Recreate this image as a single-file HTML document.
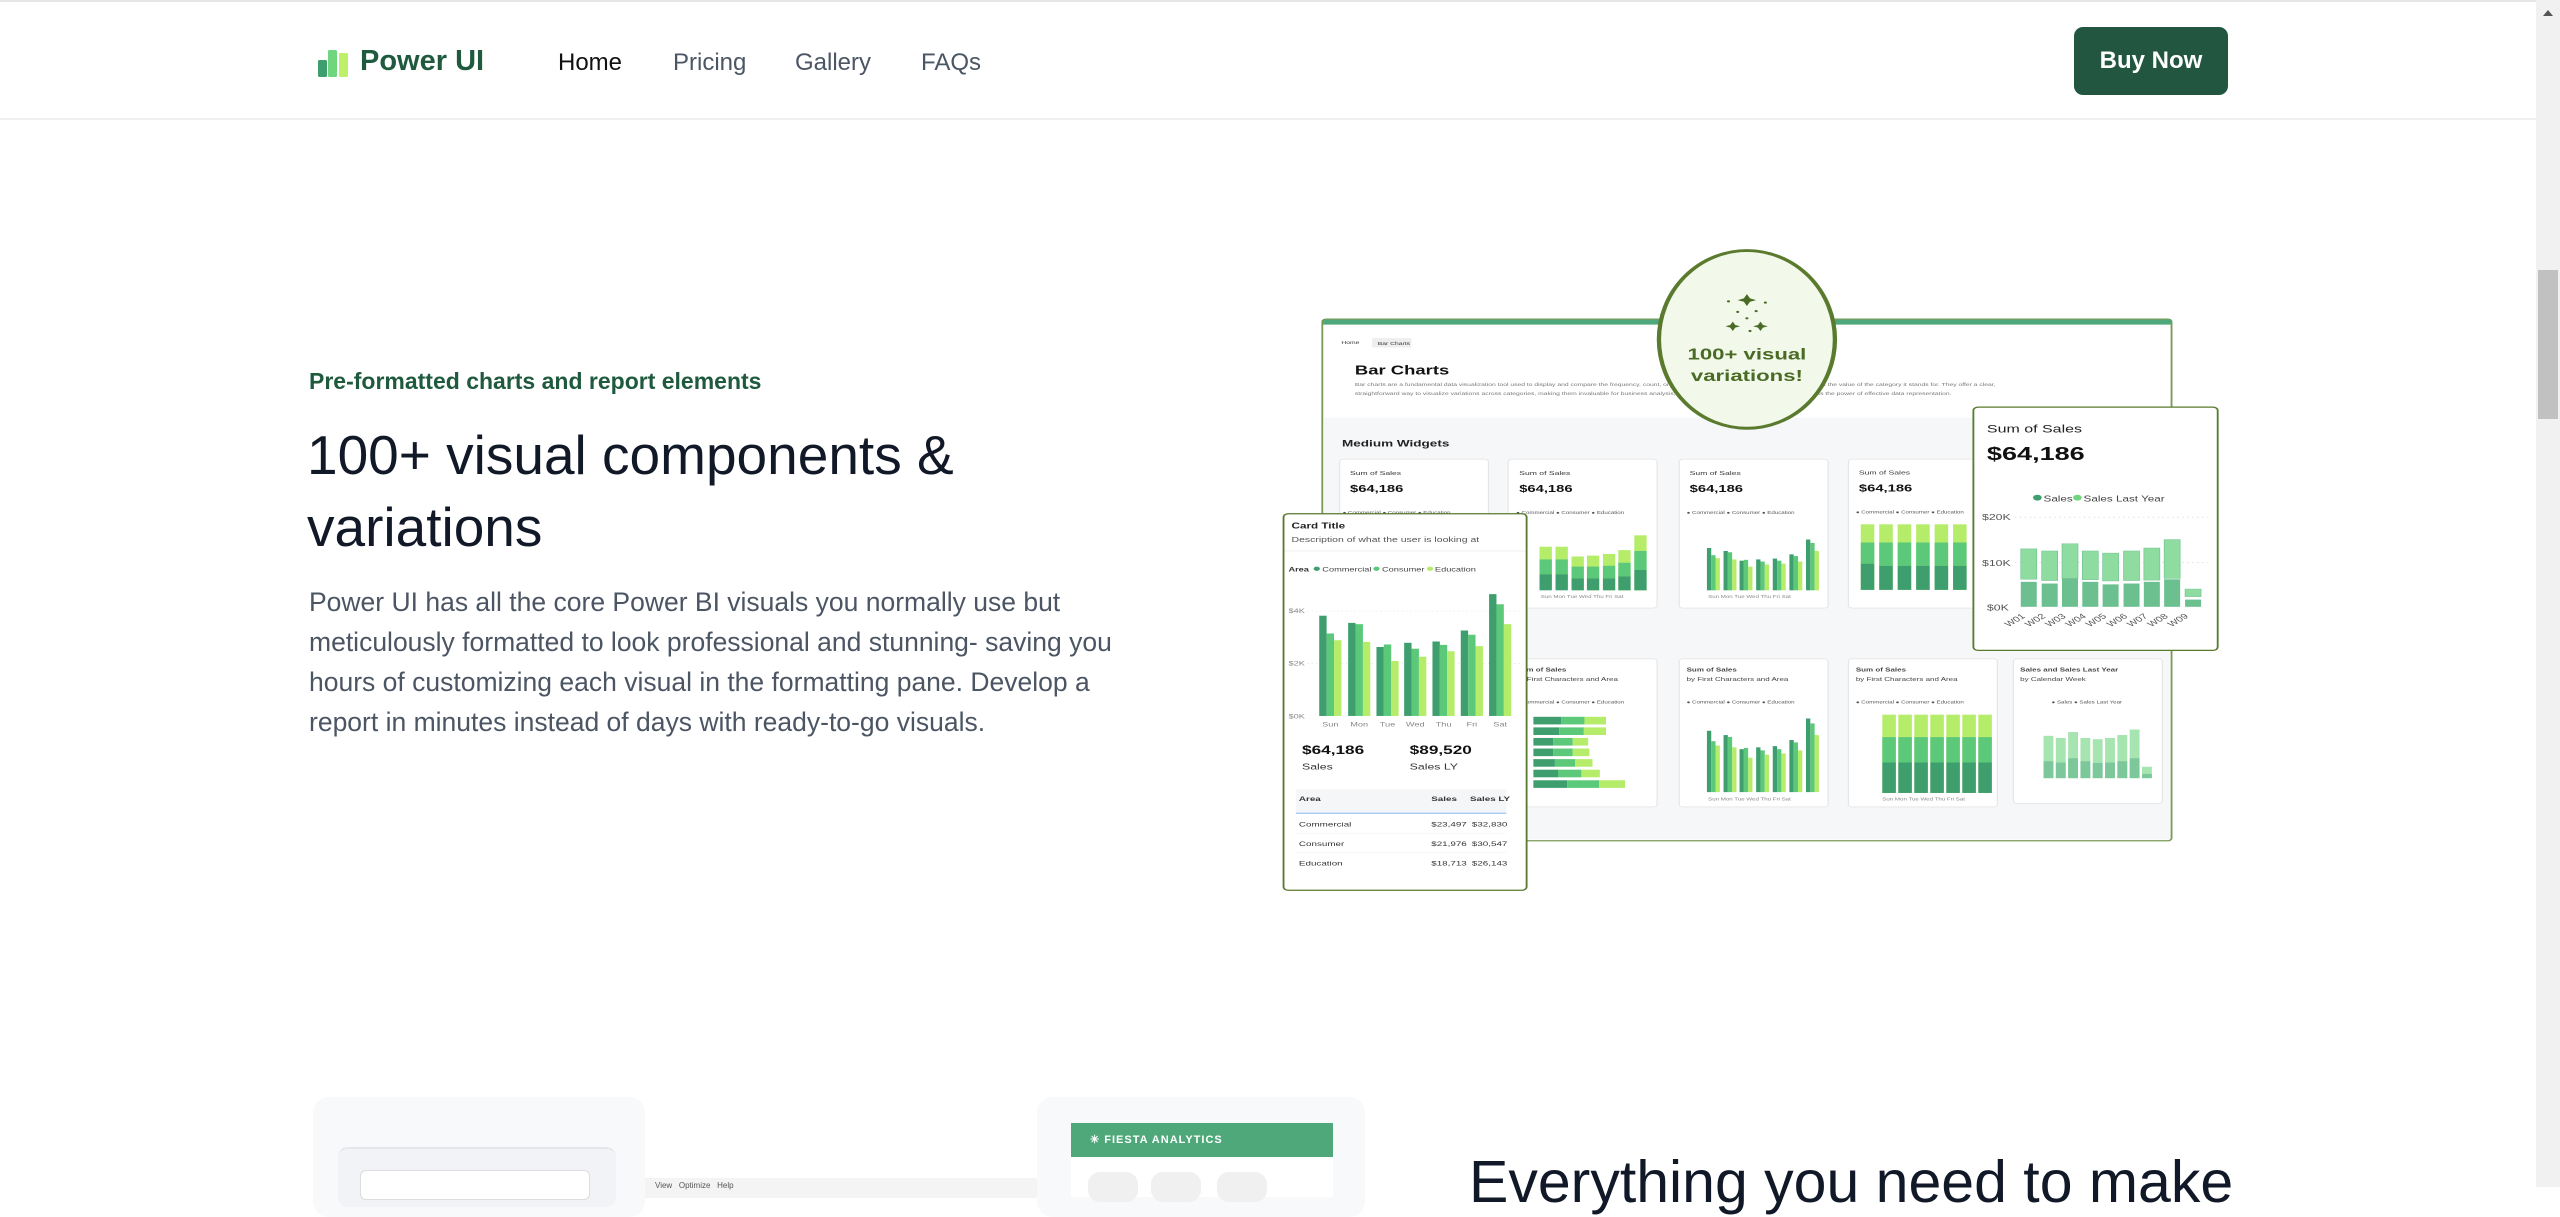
<!DOCTYPE html>
<html><head><meta charset="utf-8">
<style>
*{margin:0;padding:0;box-sizing:border-box}
html,body{width:2560px;height:1187px;overflow:hidden;background:#fff;font-family:"Liberation Sans",sans-serif}
.abs{position:absolute}
.hdr{left:0;top:0;width:2536px;height:120px;border-top:2px solid #e5e5e5;border-bottom:2px solid #f0f0f0;background:#fff}
.nav{font-size:24px;color:#4b5563;top:49px}
.sb{left:2536px;top:0;width:24px;height:1187px;background:#f1f1f1}
</style></head><body>
<div class="abs hdr"></div>
<svg class="abs" style="left:318px;top:48px" width="36" height="30"><rect x="0" y="12" width="9" height="17" rx="1.5" fill="#3f9e6e"/><rect x="10" y="2" width="9" height="27" rx="1.5" fill="#6fd67e"/><rect x="21" y="5" width="9" height="24" rx="1.5" fill="#bff06a"/></svg>
<div class="abs" style="left:360px;top:45px;font-size:29px;font-weight:bold;color:#1f5a3e">Power UI</div>
<div class="abs nav" style="left:558px;color:#111">Home</div>
<div class="abs nav" style="left:673px">Pricing</div>
<div class="abs nav" style="left:795px">Gallery</div>
<div class="abs nav" style="left:921px">FAQs</div>
<div class="abs" style="left:2074px;top:27px;width:154px;height:68px;background:#235640;border-radius:9px;color:#fff;font-size:24px;font-weight:bold;text-align:center;line-height:68px">Buy Now</div>
<div class="abs sb"><div class="abs" style="left:2px;top:270px;width:20px;height:149px;background:#c1c1c1"></div><div class="abs" style="left:7px;top:10px;border:5px solid transparent;border-bottom:6px solid #555;border-top:0"></div></div>

<div class="abs" style="left:309px;top:368px;font-size:23px;font-weight:bold;color:#1f5a3e">Pre-formatted charts and report elements</div>
<div class="abs" style="left:307px;top:419px;font-size:55px;line-height:72px;color:#111827;width:800px">100+ visual components &amp;<br>variations</div>
<div class="abs" style="left:309px;top:582px;font-size:26.5px;line-height:40px;color:#4b5563;width:850px">Power UI has all the core Power BI visuals you normally use but meticulously formatted to look professional and stunning- saving you hours of customizing each visual in the formatting pane. Develop a report in minutes instead of days with ready-to-go visuals.</div>

<svg class="abs" style="left:1270px;top:240px" width="960" height="660" viewBox="0 0 1560 1560" preserveAspectRatio="none" font-family="Liberation Sans">
<rect x="85" y="187" width="1380" height="1233" rx="6" fill="#fff" stroke="#7a9a55" stroke-width="3"/>
<rect x="86" y="188" width="1378" height="12" fill="#4ea87a"/>
<rect x="88" y="420" width="1374" height="997" fill="#f6f7f9"/>
<text x="116" y="246" font-size="11" fill="#333">Home</text><rect x="166" y="232" width="64" height="22" fill="#eee"/><text x="175" y="248" font-size="11" fill="#333">Bar Charts</text>
<text x="138" y="318" font-size="30" font-weight="bold" fill="#111">Bar Charts</text>
<text x="138" y="345" font-size="11" fill="#777">Bar charts are a fundamental data visualization tool used to display and compare the frequency, count, or ... horizontal bars, the length of each bar represents the value of the category it stands for. They offer a clear,</text>
<text x="138" y="366" font-size="11" fill="#777">straightforward way to visualize variations across categories, making them invaluable for business analysis, ... explore various bar chart designs and harness the power of effective data representation.</text>
<text x="117" y="488" font-size="22" font-weight="bold" fill="#222">Medium Widgets</text>
<g fill="#fff" stroke="#e6e6e6" stroke-width="2">
<rect x="113" y="518" width="242" height="352" rx="6"/><rect x="387" y="518" width="242" height="352" rx="6"/><rect x="665" y="518" width="242" height="352" rx="6"/><rect x="940" y="518" width="242" height="352" rx="6"/>
<rect x="387" y="990" width="242" height="350" rx="6"/><rect x="665" y="990" width="242" height="350" rx="6"/><rect x="940" y="990" width="242" height="350" rx="6"/><rect x="1208" y="990" width="242" height="342" rx="6"/>
</g>
<g font-size="14" fill="#333"><text x="130" y="556">Sum of Sales</text><text x="405" y="556">Sum of Sales</text><text x="682" y="556">Sum of Sales</text><text x="957" y="554">Sum of Sales</text></g>
<g font-size="24" font-weight="bold" fill="#111"><text x="130" y="596">$64,186</text><text x="405" y="596">$64,186</text><text x="682" y="596">$64,186</text><text x="957" y="594">$64,186</text></g>
<g font-size="10" fill="#555"><text x="118" y="648">● Commercial ● Consumer ● Education</text><text x="400" y="648">● Commercial ● Consumer ● Education</text><text x="677" y="648">● Commercial ● Consumer ● Education</text><text x="952" y="646">● Commercial ● Consumer ● Education</text>
<text x="400" y="1095">● Commercial ● Consumer ● Education</text><text x="677" y="1095">● Commercial ● Consumer ● Education</text><text x="952" y="1095">● Commercial ● Consumer ● Education</text><text x="1270" y="1095">● Sales ● Sales Last Year</text></g>
<g font-size="13" fill="#444"><text x="400" y="1020" font-weight="bold">Sum of Sales</text><text x="677" y="1020" font-weight="bold">Sum of Sales</text><text x="952" y="1020" font-weight="bold">Sum of Sales</text><text x="1219" y="1020" font-weight="bold">Sales and Sales Last Year</text><text x="400" y="1042">by First Characters and Area</text><text x="677" y="1042">by First Characters and Area</text><text x="952" y="1042">by First Characters and Area</text><text x="1219" y="1042">by Calendar Week</text></g>
<!-- widget 2 stacked -->
<g><rect x="438" y="725" width="20" height="100" fill="#b5ec6a"/><rect x="438" y="755" width="20" height="35" fill="#5cc97a"/><rect x="438" y="790" width="20" height="38" fill="#3f9e6e"/>
<rect x="464" y="725" width="20" height="100" fill="#b5ec6a"/><rect x="464" y="755" width="20" height="35" fill="#5cc97a"/><rect x="464" y="790" width="20" height="38" fill="#3f9e6e"/>
<rect x="490" y="748" width="20" height="80" fill="#b5ec6a"/><rect x="490" y="772" width="20" height="28" fill="#5cc97a"/><rect x="490" y="800" width="20" height="28" fill="#3f9e6e"/>
<rect x="515" y="746" width="20" height="82" fill="#b5ec6a"/><rect x="515" y="772" width="20" height="28" fill="#5cc97a"/><rect x="515" y="800" width="20" height="28" fill="#3f9e6e"/>
<rect x="541" y="742" width="20" height="86" fill="#b5ec6a"/><rect x="541" y="770" width="20" height="30" fill="#5cc97a"/><rect x="541" y="800" width="20" height="28" fill="#3f9e6e"/>
<rect x="566" y="733" width="20" height="95" fill="#b5ec6a"/><rect x="566" y="763" width="20" height="32" fill="#5cc97a"/><rect x="566" y="795" width="20" height="33" fill="#3f9e6e"/>
<rect x="592" y="698" width="20" height="130" fill="#b5ec6a"/><rect x="592" y="735" width="20" height="45" fill="#5cc97a"/><rect x="592" y="780" width="20" height="48" fill="#3f9e6e"/></g>
<!-- widget 3 grouped bars -->
<g id="gb"><rect x="710" y="728" width="7" height="100" fill="#3f9e6e"/><rect x="717" y="745" width="7" height="83" fill="#5cc97a"/><rect x="724" y="752" width="7" height="76" fill="#b5ec6a"/>
<rect x="737" y="735" width="7" height="93" fill="#3f9e6e"/><rect x="744" y="738" width="7" height="90" fill="#5cc97a"/><rect x="751" y="755" width="7" height="73" fill="#b5ec6a"/>
<rect x="763" y="758" width="7" height="70" fill="#3f9e6e"/><rect x="770" y="756" width="7" height="72" fill="#5cc97a"/><rect x="777" y="772" width="7" height="56" fill="#b5ec6a"/>
<rect x="790" y="755" width="7" height="73" fill="#3f9e6e"/><rect x="797" y="760" width="7" height="68" fill="#5cc97a"/><rect x="804" y="767" width="7" height="61" fill="#b5ec6a"/>
<rect x="817" y="753" width="7" height="75" fill="#3f9e6e"/><rect x="824" y="758" width="7" height="70" fill="#5cc97a"/><rect x="831" y="765" width="7" height="63" fill="#b5ec6a"/>
<rect x="844" y="743" width="7" height="85" fill="#3f9e6e"/><rect x="851" y="747" width="7" height="81" fill="#5cc97a"/><rect x="858" y="760" width="7" height="68" fill="#b5ec6a"/>
<rect x="871" y="708" width="7" height="120" fill="#3f9e6e"/><rect x="878" y="716" width="7" height="112" fill="#5cc97a"/><rect x="885" y="735" width="7" height="93" fill="#b5ec6a"/></g>
<g transform="translate(0,1305) scale(1,1.45) translate(0,-828)"><use href="#gb"/></g>
<g font-size="10" fill="#888"><text x="712" y="846">Sun  Mon  Tue  Wed  Thu  Fri  Sat</text><text x="712" y="1325">Sun  Mon  Tue  Wed  Thu  Fri  Sat</text><text x="440" y="846">Sun  Mon  Tue  Wed  Thu  Fri  Sat</text><text x="995" y="1325">Sun  Mon  Tue  Wed  Thu  Fri  Sat</text></g>
<!-- widget 4 stacked 100% -->
<g><rect x="960" y="672" width="22" height="155" fill="#b5ec6a"/><rect x="960" y="715" width="22" height="50" fill="#5cc97a"/><rect x="960" y="765" width="22" height="62" fill="#3f9e6e"/>
<rect x="990" y="672" width="22" height="155" fill="#b5ec6a"/><rect x="990" y="715" width="22" height="55" fill="#5cc97a"/><rect x="990" y="770" width="22" height="57" fill="#3f9e6e"/>
<rect x="1020" y="672" width="22" height="155" fill="#b5ec6a"/><rect x="1020" y="715" width="22" height="55" fill="#5cc97a"/><rect x="1020" y="770" width="22" height="57" fill="#3f9e6e"/>
<rect x="1050" y="672" width="22" height="155" fill="#b5ec6a"/><rect x="1050" y="715" width="22" height="55" fill="#5cc97a"/><rect x="1050" y="770" width="22" height="57" fill="#3f9e6e"/>
<rect x="1080" y="672" width="22" height="155" fill="#b5ec6a"/><rect x="1080" y="715" width="22" height="55" fill="#5cc97a"/><rect x="1080" y="770" width="22" height="57" fill="#3f9e6e"/>
<rect x="1110" y="672" width="22" height="155" fill="#b5ec6a"/><rect x="1110" y="715" width="22" height="55" fill="#5cc97a"/><rect x="1110" y="770" width="22" height="57" fill="#3f9e6e"/></g>
<g transform="translate(35,450)"><rect x="960" y="672" width="22" height="185" fill="#b5ec6a"/><rect x="960" y="725" width="22" height="60" fill="#5cc97a"/><rect x="960" y="785" width="22" height="72" fill="#3f9e6e"/>
<rect x="986" y="672" width="22" height="185" fill="#b5ec6a"/><rect x="986" y="725" width="22" height="60" fill="#5cc97a"/><rect x="986" y="785" width="22" height="72" fill="#3f9e6e"/>
<rect x="1012" y="672" width="22" height="185" fill="#b5ec6a"/><rect x="1012" y="725" width="22" height="60" fill="#5cc97a"/><rect x="1012" y="785" width="22" height="72" fill="#3f9e6e"/>
<rect x="1038" y="672" width="22" height="185" fill="#b5ec6a"/><rect x="1038" y="725" width="22" height="60" fill="#5cc97a"/><rect x="1038" y="785" width="22" height="72" fill="#3f9e6e"/>
<rect x="1064" y="672" width="22" height="185" fill="#b5ec6a"/><rect x="1064" y="725" width="22" height="60" fill="#5cc97a"/><rect x="1064" y="785" width="22" height="72" fill="#3f9e6e"/>
<rect x="1090" y="672" width="22" height="185" fill="#b5ec6a"/><rect x="1090" y="725" width="22" height="60" fill="#5cc97a"/><rect x="1090" y="785" width="22" height="72" fill="#3f9e6e"/>
<rect x="1116" y="672" width="22" height="185" fill="#b5ec6a"/><rect x="1116" y="725" width="22" height="60" fill="#5cc97a"/><rect x="1116" y="785" width="22" height="72" fill="#3f9e6e"/></g>
<!-- horizontal bars row2 -->
<g><rect x="428" y="1127" width="45" height="18" fill="#3f9e6e"/><rect x="473" y="1127" width="38" height="18" fill="#5cc97a"/><rect x="511" y="1127" width="35" height="18" fill="#b5ec6a"/>
<rect x="428" y="1152" width="42" height="18" fill="#3f9e6e"/><rect x="470" y="1152" width="40" height="18" fill="#5cc97a"/><rect x="510" y="1152" width="36" height="18" fill="#b5ec6a"/>
<rect x="428" y="1177" width="32" height="18" fill="#3f9e6e"/><rect x="460" y="1177" width="32" height="18" fill="#5cc97a"/><rect x="492" y="1177" width="25" height="18" fill="#b5ec6a"/>
<rect x="428" y="1202" width="32" height="18" fill="#3f9e6e"/><rect x="460" y="1202" width="32" height="18" fill="#5cc97a"/><rect x="492" y="1202" width="27" height="18" fill="#b5ec6a"/>
<rect x="428" y="1227" width="35" height="18" fill="#3f9e6e"/><rect x="463" y="1227" width="33" height="18" fill="#5cc97a"/><rect x="496" y="1227" width="28" height="18" fill="#b5ec6a"/>
<rect x="428" y="1252" width="40" height="18" fill="#3f9e6e"/><rect x="468" y="1252" width="38" height="18" fill="#5cc97a"/><rect x="506" y="1252" width="30" height="18" fill="#b5ec6a"/>
<rect x="428" y="1277" width="55" height="18" fill="#3f9e6e"/><rect x="483" y="1277" width="52" height="18" fill="#5cc97a"/><rect x="535" y="1277" width="42" height="18" fill="#b5ec6a"/></g>
<!-- row2 small sales chart -->
<g><rect x="1257" y="1172" width="16" height="100" fill="#a6e4b0"/><rect x="1277" y="1177" width="16" height="95" fill="#a6e4b0"/><rect x="1297" y="1163" width="16" height="109" fill="#a6e4b0"/><rect x="1317" y="1177" width="16" height="95" fill="#a6e4b0"/><rect x="1337" y="1180" width="16" height="92" fill="#a6e4b0"/><rect x="1357" y="1177" width="16" height="95" fill="#a6e4b0"/><rect x="1377" y="1170" width="16" height="102" fill="#a6e4b0"/><rect x="1397" y="1157" width="16" height="115" fill="#a6e4b0"/><rect x="1417" y="1245" width="16" height="27" fill="#a6e4b0"/>
<rect x="1257" y="1232" width="16" height="40" fill="#7cc89a"/><rect x="1277" y="1235" width="16" height="37" fill="#7cc89a"/><rect x="1297" y="1225" width="16" height="47" fill="#7cc89a"/><rect x="1317" y="1232" width="16" height="40" fill="#7cc89a"/><rect x="1337" y="1236" width="16" height="36" fill="#7cc89a"/><rect x="1357" y="1235" width="16" height="37" fill="#7cc89a"/><rect x="1377" y="1232" width="16" height="40" fill="#7cc89a"/><rect x="1397" y="1225" width="16" height="47" fill="#7cc89a"/><rect x="1417" y="1262" width="16" height="10" fill="#7cc89a"/></g>
<!-- circle badge -->
<ellipse cx="775" cy="235" rx="143" ry="210" fill="#f2f8ea" stroke="#5a7a2e" stroke-width="7"/>
<g fill="#4a6b25"><path d="M775 128 l5 10 10 4 -10 4 -5 10 -5 -10 -10 -4 10 -4z"/><path d="M752 193 l4 8 8 3 -8 3 -4 8 -4 -8 -8 -3 8 -3z"/><path d="M797 193 l4 8 8 3 -8 3 -4 8 -4 -8 -8 -3 8 -3z"/><circle cx="745" cy="145" r="2.5"/><circle cx="805" cy="148" r="2.5"/><circle cx="760" cy="170" r="2.5"/><circle cx="790" cy="168" r="2.5"/><circle cx="775" cy="185" r="2.5"/><circle cx="780" cy="215" r="2.5"/></g>
<text x="775" y="283" font-size="36" font-weight="bold" fill="#4a6b25" text-anchor="middle">100+ visual</text>
<text x="775" y="333" font-size="36" font-weight="bold" fill="#4a6b25" text-anchor="middle">variations!</text>
<!-- left card -->
<rect x="22" y="647" width="395" height="890" rx="8" fill="#fff" stroke="#5a7a2e" stroke-width="3"/>
<text x="35" y="682" font-size="19" fill="#222" font-weight="bold">Card Title</text>
<text x="35" y="714" font-size="17" fill="#555">Description of what the user is looking at</text>
<line x1="24" y1="735" x2="415" y2="735" stroke="#eee" stroke-width="2"/>
<text x="30" y="784" font-size="15" fill="#333" font-weight="bold">Area</text>
<circle cx="76" cy="777" r="5" fill="#3f9e6e"/><text x="85" y="784" font-size="15" fill="#444">Commercial</text>
<circle cx="173" cy="777" r="5" fill="#5cc97a"/><text x="182" y="784" font-size="15" fill="#444">Consumer</text>
<circle cx="260" cy="777" r="5" fill="#b5ec6a"/><text x="268" y="784" font-size="15" fill="#444">Education</text>
<g font-size="15" fill="#888"><text x="30" y="882">$4K</text><text x="30" y="1006">$2K</text><text x="30" y="1131">$0K</text></g>
<g stroke="#ddd" stroke-dasharray="3 4"><line x1="60" y1="877" x2="410" y2="877"/><line x1="60" y1="1001" x2="410" y2="1001"/></g>
<g><rect x="80" y="888" width="12" height="237" fill="#3f9e6e"/><rect x="92" y="930" width="12" height="195" fill="#5cc97a"/><rect x="104" y="946" width="12" height="179" fill="#b5ec6a"/>
<rect x="127" y="905" width="12" height="220" fill="#3f9e6e"/><rect x="139" y="908" width="12" height="217" fill="#5cc97a"/><rect x="151" y="950" width="12" height="175" fill="#b5ec6a"/>
<rect x="173" y="962" width="12" height="163" fill="#3f9e6e"/><rect x="185" y="956" width="12" height="169" fill="#5cc97a"/><rect x="197" y="995" width="12" height="130" fill="#b5ec6a"/>
<rect x="218" y="952" width="12" height="173" fill="#3f9e6e"/><rect x="230" y="966" width="12" height="159" fill="#5cc97a"/><rect x="242" y="985" width="12" height="140" fill="#b5ec6a"/>
<rect x="264" y="949" width="12" height="176" fill="#3f9e6e"/><rect x="276" y="957" width="12" height="168" fill="#5cc97a"/><rect x="288" y="972" width="12" height="153" fill="#b5ec6a"/>
<rect x="310" y="923" width="12" height="202" fill="#3f9e6e"/><rect x="322" y="933" width="12" height="192" fill="#5cc97a"/><rect x="334" y="960" width="12" height="165" fill="#b5ec6a"/>
<rect x="356" y="837" width="12" height="288" fill="#3f9e6e"/><rect x="368" y="861" width="12" height="264" fill="#5cc97a"/><rect x="380" y="908" width="12" height="217" fill="#b5ec6a"/></g>
<g font-size="15" fill="#888" text-anchor="middle"><text x="98" y="1150">Sun</text><text x="145" y="1150">Mon</text><text x="191" y="1150">Tue</text><text x="236" y="1150">Wed</text><text x="282" y="1150">Thu</text><text x="328" y="1150">Fri</text><text x="374" y="1150">Sat</text></g>
<text x="52" y="1215" font-size="28" font-weight="bold" fill="#111">$64,186</text><text x="52" y="1252" font-size="20" fill="#333">Sales</text>
<text x="227" y="1215" font-size="28" font-weight="bold" fill="#111">$89,520</text><text x="227" y="1252" font-size="20" fill="#333">Sales LY</text>
<rect x="42" y="1298" width="342" height="55" fill="#f5f6f8"/>
<line x1="42" y1="1355" x2="384" y2="1355" stroke="#9cc4ee" stroke-width="3"/>
<g font-size="16" fill="#333"><text x="47" y="1326" font-weight="bold">Area</text><text x="262" y="1326" font-weight="bold">Sales</text><text x="325" y="1326" font-weight="bold">Sales LY</text>
<text x="47" y="1386">Commercial</text><text x="262" y="1386">$23,497</text><text x="328" y="1386">$32,830</text>
<text x="47" y="1432">Consumer</text><text x="262" y="1432">$21,976</text><text x="328" y="1432">$30,547</text>
<text x="47" y="1478">Education</text><text x="262" y="1478">$18,713</text><text x="328" y="1478">$26,143</text></g>
<g stroke="#eee"><line x1="42" y1="1402" x2="384" y2="1402"/><line x1="42" y1="1448" x2="384" y2="1448"/></g>
<!-- right card -->
<rect x="1143" y="395" width="397" height="575" rx="8" fill="#fff" stroke="#5a7a2e" stroke-width="3"/>
<text x="1165" y="455" font-size="26" fill="#222">Sum of Sales</text>
<text x="1165" y="520" font-size="44" font-weight="bold" fill="#111">$64,186</text>
<circle cx="1247" cy="609" r="7" fill="#3f9e6e"/><text x="1257" y="618" font-size="19" fill="#444">Sales</text>
<circle cx="1312" cy="609" r="7" fill="#6fd67e"/><text x="1322" y="618" font-size="19" fill="#444">Sales Last Year</text>
<g font-size="20" fill="#555"><text x="1157" y="662">$20K</text><text x="1157" y="770">$10K</text><text x="1165" y="876">$0K</text></g>
<g stroke="#ccc" stroke-dasharray="3 5"><line x1="1210" y1="655" x2="1525" y2="655"/><line x1="1210" y1="762" x2="1525" y2="762"/></g>
<g fill="#8fdca0" stroke="#6cbf8e"><rect x="1220" y="730" width="26" height="72"/><rect x="1254" y="735" width="26" height="70"/><rect x="1287" y="718" width="26" height="82"/><rect x="1320" y="735" width="26" height="68"/><rect x="1353" y="740" width="26" height="66"/><rect x="1387" y="735" width="26" height="70"/><rect x="1420" y="728" width="26" height="76"/><rect x="1453" y="708" width="26" height="92"/><rect x="1487" y="825" width="26" height="18"/></g>
<g fill="#6cbf8e"><rect x="1220" y="808" width="26" height="59"/><rect x="1254" y="812" width="26" height="55"/><rect x="1287" y="800" width="26" height="67"/><rect x="1320" y="808" width="26" height="59"/><rect x="1353" y="814" width="26" height="53"/><rect x="1387" y="812" width="26" height="55"/><rect x="1420" y="808" width="26" height="59"/><rect x="1453" y="802" width="26" height="65"/><rect x="1487" y="850" width="26" height="17"/></g>
<g font-size="18" fill="#555"><text x="1200" y="915" transform="rotate(-40 1200 915)">W01</text><text x="1233" y="915" transform="rotate(-40 1233 915)">W02</text><text x="1266" y="915" transform="rotate(-40 1266 915)">W03</text><text x="1299" y="915" transform="rotate(-40 1299 915)">W04</text><text x="1332" y="915" transform="rotate(-40 1332 915)">W05</text><text x="1366" y="915" transform="rotate(-40 1366 915)">W06</text><text x="1399" y="915" transform="rotate(-40 1399 915)">W07</text><text x="1432" y="915" transform="rotate(-40 1432 915)">W08</text><text x="1465" y="915" transform="rotate(-40 1465 915)">W09</text></g>
</svg>

<!-- bottom section -->
<div class="abs" style="left:313px;top:1097px;width:332px;height:120px;background:#f8f9fb;border-radius:16px"></div>
<div class="abs" style="left:338px;top:1147px;width:278px;height:60px;background:#f1f3f6;border-radius:10px;border-top:2px solid #e4e6ea"></div>
<div class="abs" style="left:360px;top:1170px;width:230px;height:30px;background:#fff;border-radius:6px;border:1px solid #ddd"></div>
<div class="abs" style="left:645px;top:1178px;width:392px;height:20px;background:#f4f4f4"></div>
<div class="abs" style="left:655px;top:1181px;font-size:8px;color:#555">View &nbsp; Optimize &nbsp; Help</div>
<div class="abs" style="left:1037px;top:1097px;width:328px;height:120px;background:#f8f9fb;border-radius:16px"></div>
<div class="abs" style="left:1071px;top:1123px;width:262px;height:34px;background:#4ea87a"></div>
<div class="abs" style="left:1090px;top:1133px;font-size:11px;font-weight:bold;color:#fff;letter-spacing:1px">✳ FIESTA ANALYTICS</div>
<div class="abs" style="left:1071px;top:1157px;width:262px;height:40px;background:#fff"></div>
<div class="abs" style="left:1088px;top:1172px;width:50px;height:30px;background:#f0f0f0;border-radius:12px"></div>
<div class="abs" style="left:1151px;top:1172px;width:50px;height:30px;background:#f0f0f0;border-radius:12px"></div>
<div class="abs" style="left:1217px;top:1172px;width:50px;height:30px;background:#f0f0f0;border-radius:12px"></div>
<div class="abs" style="left:1469px;top:1148px;font-size:59px;color:#111827;white-space:nowrap">Everything you need to make</div>
</body></html>
